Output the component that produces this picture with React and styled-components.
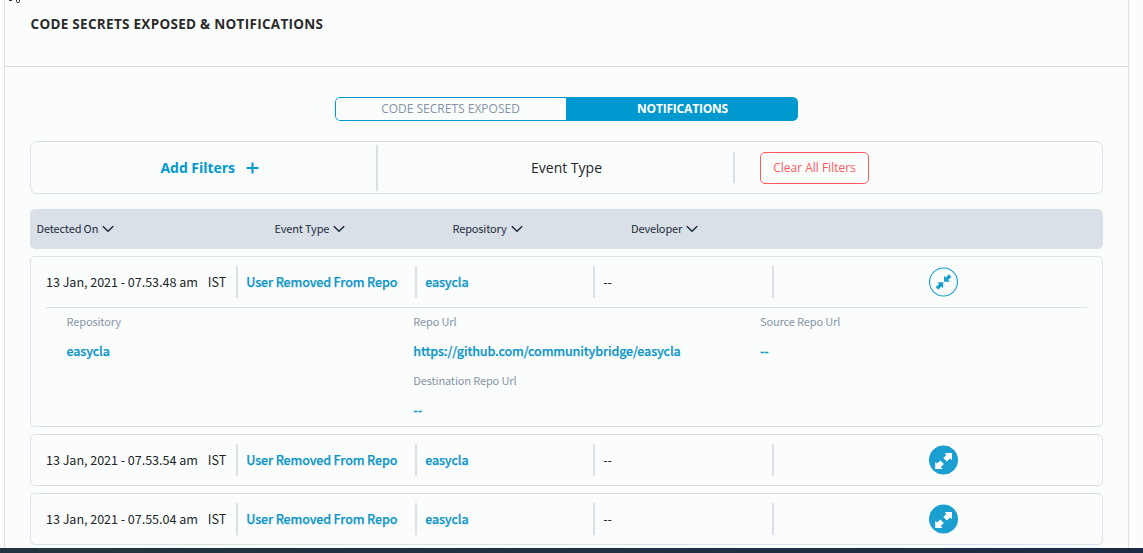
import React from 'react';
import styled, { createGlobalStyle, css } from 'styled-components';

const OPEN = '"Open Sans", "Noto Sans", sans-serif';
const SOURCE = '"Noto Sans CJK SC", "Open Sans", sans-serif';

const GlobalStyle = createGlobalStyle`
  *, *::before, *::after { box-sizing: border-box; }
  html, body { margin: 0; padding: 0; background: #fbfdfc; overflow: hidden; }
`;

const Page = styled.div`
  width: 1143px;
  height: 553px;
  display: flex;
  flex-direction: column;
  overflow: hidden;
  background: #fbfdfc;
  font-family: ${OPEN};
  color: #212529;
`;

const Panel = styled.section`
  position: relative;
  width: 1125px;
  height: 548px;
  margin-left: 4px;
  border: solid #dcdfe0;
  border-width: 0 1px;
  flex: none;
`;

const Footer = styled.footer`
  flex: 1;
  background: linear-gradient(90deg, #22353f, #1b2b45);
`;

const CutText = styled.svg`
  position: absolute;
  left: 2px;
  top: 0;
`;

const PanelHeader = styled.header`
  height: 67px;
  padding: 14px 0 0 25.5px;
  border-bottom: 1px solid #dcdfe0;
`;

const Title = styled.h1`
  margin: 0;
  font-size: 13.5px;
  line-height: 20px;
  font-weight: 700;
  color: #2b2b2b;
  white-space: nowrap;
  letter-spacing: 0.29px;
`;

const PanelBody = styled.div`
  padding: 30px 25px 0;
  display: flex;
  flex-direction: column;
`;

const Tabs = styled.div`
  width: 463px;
  height: 24px;
  margin-left: 305px;
  display: grid;
  grid-template-columns: 231px 232px;
  border-radius: 5px;
  overflow: hidden;
`;

const Tab = styled.button`
  padding: 0 1px 1px 0;
  border: 1px solid #0099cf;
  border-right: 0;
  border-radius: 5px 0 0 5px;
  background: transparent;
  color: #8493a8;
  font: 400 12px/20px ${OPEN};
  ${p => p.$active && css`
    padding-right: 0;
    border-radius: 0 5px 5px 0;
    background: #0099cf;
    color: #fff;
    font-weight: 700;
    letter-spacing: -0.2px;
  `}
`;

const FilterBar = styled.div`
  height: 53px;
  margin-top: 20px;
  display: grid;
  grid-template-columns: 345px 2px 355px 2px 1fr;
  align-items: center;
  border: 1px solid #d9e0e8;
  border-radius: 7px;
`;

const AddFilters = styled.div`
  display: flex;
  align-items: center;
  padding-left: 129.5px;
  gap: 11px;
  color: #0099cf;
  font-size: 14px;
  line-height: 20px;
  font-weight: 700;
  letter-spacing: -0.05px;
  white-space: nowrap;

  svg {
    position: relative;
    top: 1px;
  }
`;

const FilterLabel = styled.div`
  text-align: center;
  font-size: 14px;
  line-height: 20px;
  padding-left: 22px;
`;

const Divider = styled.span`
  width: 2px;
  height: ${p => p.$height}px;
  background: #d9e0e8;
`;

const ClearButton = styled.button`
  width: 109px;
  height: 32px;
  margin-left: 25px;
  padding: 0;
  border: 1px solid #ff5a5f;
  border-radius: 5px;
  background: transparent;
  color: #ff5a5f;
  font: 400 12px/20px ${OPEN};
  white-space: nowrap;
`;

const TableHead = styled.div`
  height: 40px;
  margin-top: 15px;
  padding: 0 0 2px 6.5px;
  display: grid;
  grid-template-columns: 238px 178px 178.5px 1fr;
  align-items: center;
  border-radius: 5px;
  background: #d9e0e8;
  color: #1c2b3d;
`;

const HeadCell = styled.div`
  display: flex;
  align-items: center;
  gap: 4px;
  font: 400 11px/16px ${SOURCE};
  letter-spacing: -0.15px;

  svg {
    position: relative;
    top: 1px;
  }
`;

const Card = styled.article`
  height: ${p => (p.$open ? 171 : 52)}px;
  margin-top: 7px;
  padding: 0 15px;
  border: 1px solid #d9e0e8;
  border-radius: 5px;
`;

const Row = styled.div`
  height: ${p => (p.$open ? 51 : 50)}px;
  display: grid;
  grid-template-columns: 190px 179px 178px 179px 1fr;
  align-items: center;
  border-bottom: ${p => (p.$open ? '1px solid #d9e0e8' : '0')};
`;

const Cell = styled.div`
  height: 32px;
  display: flex;
  align-items: center;
  padding-left: ${p => (p.$first ? 0 : 8.2)}px;
  border-left: ${p => (p.$first ? '0' : '2px solid #d9e0e8')};
  font: 400 12.6px/20px ${SOURCE};
  letter-spacing: ${p => (p.$first ? '-0.05px' : '0')};
  white-space: nowrap;
`;

const Zone = styled.span`
  margin-left: 10px;
`;

const Link = styled.span`
  font: 500 12.5px/20px ${SOURCE};
  color: #0f96c8;
  -webkit-text-stroke: 0.25px #0f96c8;
  white-space: nowrap;
  letter-spacing: -0.13px;
`;

const ActionCell = styled(Cell)`
  padding-left: 155px;
`;

const Details = styled.div`
  padding: 3px 0 0 20.5px;
  display: grid;
  grid-template-columns: 346.8px 346.7px 1fr;
`;

const Field = styled.div`
  height: 59px;
  display: flex;
  flex-direction: column;
  gap: 10px;
`;

const FieldLabel = styled.span`
  font: 400 11px/20px ${SOURCE};
  letter-spacing: -0.13px;
  color: #8493a8;
`;

const Chevron = () => (
  <svg width="12" height="8" viewBox="0 0 12 8" fill="none" stroke="#1c2b3d" strokeWidth="1.5">
    <path d="M0.8 1.2 6 6.2 11.2 1.2" />
  </svg>
);

const Plus = () => (
  <svg width="13" height="13" viewBox="0 0 13 13" fill="#0099cf">
    <path d="M5.5 0.5h2V5h4.9v2H7.5v4.5h-2V7H0.6V5h4.9z" />
  </svg>
);

const Collapse = () => (
  <svg width="29" height="30" viewBox="0 0 29 30" fill="#1a9fd0">
    <circle cx="14.5" cy="15" r="14" fill="none" stroke="#1a9fd0" strokeWidth="1.2" />
    <path d="M15 8.8V14.7H20.9L19.1 12.9 22.4 10 19.9 7.3 16.8 10.4zM14.2 21.2V15.3H8.3L10.1 17.1 6.7 20.2 9.2 22.7 12.4 19.6z" />
  </svg>
);

const Expand = () => (
  <svg width="29" height="30" viewBox="0 0 29 30" fill="#fff">
    <circle cx="14.5" cy="15" r="14.5" fill="#1a9fd0" />
    <path d="M23 8V15L21 13.5 17.9 16.4 14.3 13 17.4 10 15.7 8zM6.2 24V17L8.2 18.5 11.3 15.6 14.9 19 11.8 22 13.5 24z" />
  </svg>
);

const HEADINGS = ['Detected On', 'Event Type', 'Repository', 'Developer'];

const EVENTS = [
  { time: '13 Jan, 2021 - 07.53.48 am', open: true },
  { time: '13 Jan, 2021 - 07.53.54 am' },
  { time: '13 Jan, 2021 - 07.55.04 am' },
];

function Detail({ label, value }) {
  return (
    <Field>
      <FieldLabel>{label}</FieldLabel>
      <Link>{value}</Link>
    </Field>
  );
}

function EventCard({ time, open }) {
  return (
    <Card $open={open}>
      <Row $open={open}>
        <Cell $first>{time}<Zone>IST</Zone></Cell>
        <Cell><Link>User Removed From Repo</Link></Cell>
        <Cell><Link>easycla</Link></Cell>
        <Cell>--</Cell>
        <ActionCell>{open ? <Collapse /> : <Expand />}</ActionCell>
      </Row>
      {open && (
        <Details>
          <Detail label="Repository" value="easycla" />
          <div>
            <Detail label="Repo Url" value="https://github.com/communitybridge/easycla" />
            <Detail label="Destination Repo Url" value="--" />
          </div>
          <Detail label="Source Repo Url" value="--" />
        </Details>
      )}
    </Card>
  );
}

export default function App() {
  return (
    <Page>
      <GlobalStyle />
      <Panel>
        <CutText width="16" height="4" viewBox="0 0 16 4" fill="none" stroke="#333">
          <path d="M2 0.5h3M9.5 0v1.5q0 1 1.5 1t1.5-1V0" />
        </CutText>
        <PanelHeader>
          <Title>CODE SECRETS EXPOSED &amp; NOTIFICATIONS</Title>
        </PanelHeader>
        <PanelBody>
          <Tabs>
            <Tab>CODE SECRETS EXPOSED</Tab>
            <Tab $active>NOTIFICATIONS</Tab>
          </Tabs>
          <FilterBar>
            <AddFilters>Add Filters <Plus /></AddFilters>
            <Divider $height={46} />
            <FilterLabel>Event Type</FilterLabel>
            <Divider $height={31} />
            <ClearButton>Clear All Filters</ClearButton>
          </FilterBar>
          <TableHead>
            {HEADINGS.map(h => <HeadCell key={h}>{h} <Chevron /></HeadCell>)}
          </TableHead>
          {EVENTS.map(e => <EventCard key={e.time} {...e} />)}
        </PanelBody>
      </Panel>
      <Footer />
    </Page>
  );
}
